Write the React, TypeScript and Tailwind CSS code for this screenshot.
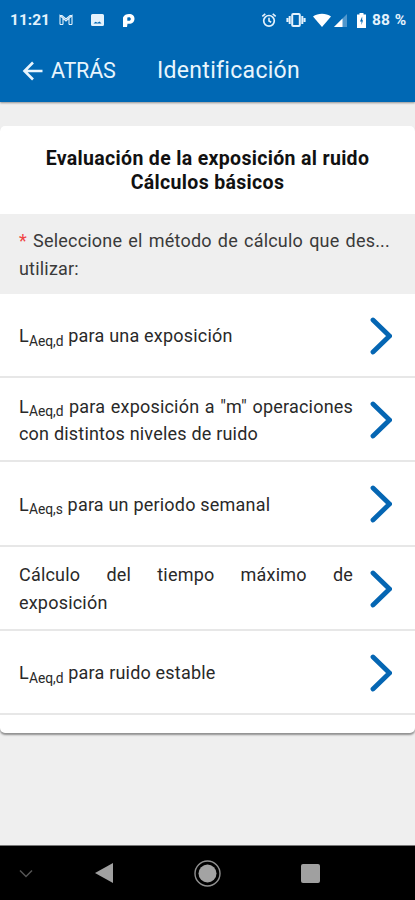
import React from 'react';

type Method = {
  sub?: string;
  text: string;
};

const methods: Method[] = [
  { sub: 'Aeq,d', text: 'para una exposición' },
  {
    sub: 'Aeq,d',
    text: 'para exposición a "m" operaciones con distintos niveles de ruido',
  },
  { sub: 'Aeq,s', text: 'para un periodo semanal' },
  { text: 'Cálculo del tiempo máximo de exposición' },
  { sub: 'Aeq,d', text: 'para ruido estable' },
];

const StatusBar = () => (
  <div className="flex h-10 items-center text-sm font-bold text-[#e4f2fc]">
    <span className="ml-[10px] w-[49px] text-[15.5px]">11:21</span>
    <svg className="h-[14px] w-[14px]" viewBox="0 0 14 14" fill="none">
      <path
        d="M1 11.5V2.5L7 8l6-5.5v9M4 11.5V5.5M10 11.5V5.5M1 2.5h2l4 3.5 4-3.5h2M1 11.5h3M10 11.5h3"
        stroke="currentColor"
        strokeWidth="1.1"
      />
    </svg>
    <svg className="ml-[18px] h-[14px] w-[13px]" viewBox="0 0 13 14">
      <path
        fill="currentColor"
        fillRule="evenodd"
        d="M1.5 1h10A1.5 1.5 0 0 1 13 2.5v9a1.5 1.5 0 0 1-1.5 1.5h-10A1.5 1.5 0 0 1 0 11.5v-9A1.5 1.5 0 0 1 1.5 1ZM2.5 10.5h8L8.5 8.5l-2 1.2-2-1Z"
      />
    </svg>
    <svg className="ml-[18px] h-[15px] w-[13px]" viewBox="0 0 13 15">
      <path
        fill="#fff"
        fillRule="evenodd"
        d="M1 4.5C2 2 4.5 1 7 1c3.5 0 5.5 2 5.5 4.8 0 3-2.3 5-5.3 5H5.5L5 14H1V6.5ZM5.3 4.5v3.3h1.5c1.3 0 2-.8 2-1.9s-.8-1.7-1.8-1.7Z"
      />
    </svg>
    <svg className="ml-[126px] h-4 w-4" viewBox="0 0 16 16" fill="none" stroke="currentColor">
      <circle cx="8" cy="8.8" r="5.3" strokeWidth="1.7" />
      <path d="M8 5.8v3.2l2.2 1.3M1.3 4.3l3-2.5M14.7 4.3l-3-2.5" strokeWidth="1.6" />
    </svg>
    <svg className="ml-[9px] h-4 w-5" viewBox="0 0 20 16">
      <rect x="6.2" y="2" width="7.6" height="12" rx="1" fill="none" stroke="currentColor" strokeWidth="2" />
      <path d="M3.7 4v8M16.3 4v8M1.4 6v4M18.6 6v4" stroke="currentColor" strokeWidth="2" />
    </svg>
    <svg className="ml-[7px] h-[14px] w-[18px]" viewBox="0 0 18 14">
      <path fill="#fff" d="M0 3.5C5-.3 13-.3 18 3.5L9 14Z" />
    </svg>
    <svg className="ml-[3px] h-[13px] w-[14px]" viewBox="0 0 14 13">
      <path fill="currentColor" fillOpacity=".35" d="M0 13L13 0v13Z" />
      <path fill="#fff" d="M0 13l8.5-8.5V13Z" />
    </svg>
    <svg className="ml-[9px] h-[15px] w-[9px]" viewBox="0 0 9 15">
      <path
        fill="#fff"
        fillRule="evenodd"
        d="M2.5 0h4v1.5H9V15H0V1.5h2.5ZM5.2 3.5L3 8.5h1.5V12L6 7.3h-.8Z"
      />
    </svg>
    <span className="mt-px ml-[6px] whitespace-nowrap text-[15.5px]">
      88 <span className="ml-px">%</span>
    </span>
  </div>
);

const Toolbar = () => (
  <div className="flex h-[61px] items-center text-[#e8f5fd]">
    <svg className="ml-[22px] h-5 w-[21px]" viewBox="0 0 21 20" fill="none">
      <path
        d="M20.5 10H2.5M11 1.5L2.5 10l8.5 8.5"
        stroke="currentColor"
        strokeWidth="2.6"
      />
    </svg>
    <span className="mt-px ml-2 w-[106px] text-[21.5px] tracking-[-0.2px]">ATRÁS</span>
    <h1 className="mt-px text-[23px] tracking-[0.3px]">Identificación</h1>
  </div>
);

const MethodRow = ({ sub, text }: Method) => (
  <li className="flex h-[84.2px] items-center border-b-2 border-[#e7e7e7] pt-[2px] pl-[19px]">
    <p className="w-[334px] text-justify text-[18px] leading-[27.5px] tracking-[0.2px]">
      {sub && (
        <>
          L<sub className="text-[13.8px] tracking-normal">{sub}</sub>{' '}
        </>
      )}
      {text}
    </p>
    <svg className="ml-[15px] h-10 w-6" viewBox="0 0 24 40" fill="none">
      <path
        d="M5 4l16.5 16L5 36"
        stroke="#0566b3"
        strokeWidth="4.8"
        strokeLinecap="round"
      />
    </svg>
  </li>
);

const NavigationBar = () => (
  <nav className="flex h-[55px] items-center border-t border-[#777] bg-black">
    <svg className="ml-[19px] h-[9px] w-[14px]" viewBox="0 0 14 9" fill="none">
      <path d="M1 1.5l6 6 6-6" stroke="#555" strokeWidth="1.5" />
    </svg>
    <svg className="ml-[62px] h-5 w-[18px]" viewBox="0 0 18 20">
      <path d="M0 10L18 0v20Z" fill="#a0a0a0" />
    </svg>
    <svg className="ml-[81px] h-[27px] w-[27px]" viewBox="0 0 27 27">
      <circle cx="13.5" cy="13.5" r="12.5" fill="none" stroke="#909090" strokeWidth="1.4" />
      <circle cx="13.5" cy="13.5" r="9" fill="#a3a3a3" />
    </svg>
    <div className="ml-20 h-[19px] w-[19px] rounded-[2px] bg-[#a0a0a0]" />
  </nav>
);

const App = () => {
  return (
    <div className="flex h-[900px] w-[415px] flex-col overflow-hidden bg-[#efefef] font-['Roboto',sans-serif] text-[#292929]">
      <header className="h-[102px] shrink-0 bg-[#0068b4] shadow-[0_1px_2px_rgba(0,0,0,0.4)]">
        <StatusBar />
        <Toolbar />
      </header>

      <main className="flex-1 pt-6">
        <section className="h-[607px] rounded-[5px] bg-white shadow-[0_2px_2px_rgba(0,0,0,0.4)]">
          <h2 className="h-[88px] pt-[21px] text-center text-[19.5px] leading-6 font-bold tracking-[0.33px] text-[#111]">
            Evaluación de la exposición al ruido
            <br />
            Cálculos básicos
          </h2>
          <div className="h-[80px] bg-[#efefef] pt-[13px] pl-[19px] text-[18px] leading-[27.5px] tracking-[0.2px] text-[#3a3a3a]">
            <p className="w-[371px] [text-align-last:justify]">
              <span className="text-[#f04444]">*</span> Seleccione el método de cálculo que des...
            </p>
            <p>utilizar:</p>
          </div>
          <ul>
            {methods.map((method) => (
              <MethodRow key={method.text} {...method} />
            ))}
          </ul>
        </section>
      </main>

      <NavigationBar />
    </div>
  );
};

export default App;
